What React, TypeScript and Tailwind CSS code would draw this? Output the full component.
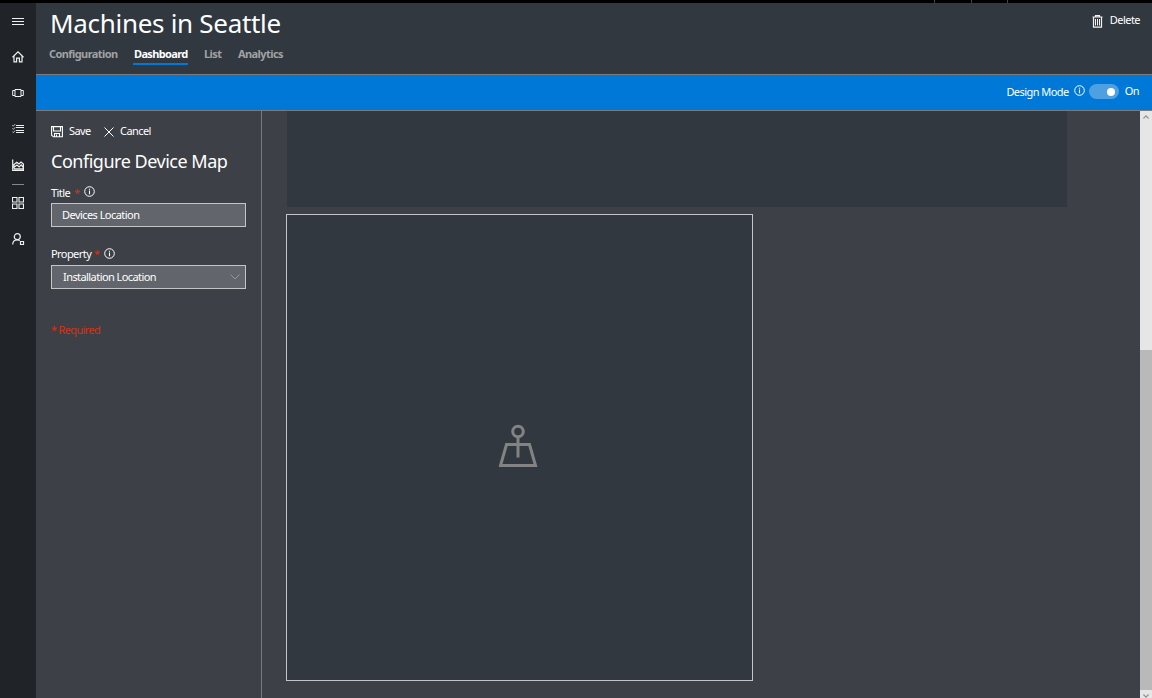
import React from "react";

type IconProps = { children: React.ReactNode; size?: number; className?: string };

function Icon({ children, size = 12, className = "" }: IconProps) {
  return (
    <svg width={size} height={size} viewBox={`0 0 ${size} ${size}`} fill="none" stroke="currentColor" strokeWidth="1" className={`block shrink-0 ${className}`}>
      {children}
    </svg>
  );
}

function InfoIcon({ className = "" }: { className?: string }) {
  return (
    <Icon size={11} className={className}>
      <circle cx="5.5" cy="5.5" r="4.8" />
      <path d="M5.5 4.6V8.3M5.5 2.7V3.8" strokeWidth="1.1" />
    </Icon>
  );
}

function Sidebar() {
  return (
    <nav className="flex w-9 shrink-0 flex-col items-center bg-[#202327] text-[#f0f0f0]">
      <div className="flex h-9 items-center">
        <Icon><path d="M0 3.5H12M0 6.5H12M0 9.5H12" /></Icon>
      </div>
      <div className="flex h-9 items-center">
        <Icon><path d="M0.5 6.3L6 0.9L11.5 6.3M2 5.2V10.8H4.6V7.2H7.4V10.8H10V5.2" strokeWidth="1.2" /></Icon>
      </div>
      <div className="flex h-9 items-center">
        <Icon><path d="M3 2.5H9V9.5H3ZM3 3.5H0.7V8.5H3M9 3.5H11.3V8.5H9" /></Icon>
      </div>
      <div className="flex h-9 items-center">
        <Icon><path d="M4 2.5H12M4 4.5H12M4 7.5H12M4 9.5H12" strokeWidth="1" /><path d="M0.3 2.2L1.3 3.2L3.2 1.1M0.3 5.4L1.3 6.4L3.2 4.3M0.3 8.6L1.3 9.6L3.2 7.5" strokeWidth="0.8" /></Icon>
      </div>
      <div className="flex h-9 items-center">
        <Icon><path d="M0.7 0.5V11.3H11.4V5L9 3L7 5L4.8 3.2L2 5.5V9.5M2.3 8L5 6L7.2 8L9.2 5.8L11 8M2 9.8H11" strokeWidth="1.2" /></Icon>
      </div>
      <div className="mt-px h-px w-3 bg-[#85878a]" />
      <div className="flex h-9 items-center">
        <Icon><path d="M0.5 0.5H5V5H0.5ZM7 0.5H11.5V5H7ZM0.5 7H5V11.5H0.5ZM7 7H11.5V11.5H7Z" strokeWidth="1.1" /></Icon>
      </div>
      <div className="flex h-9 items-center">
        <Icon size={13}><path d="M0.7 11.5C0.7 8.2 2.6 6.8 5.3 6.8C6.4 6.8 7.1 7 7.8 7.5M8.5 8.5H11.5V11.5H8.5Z" strokeWidth="1.2" /><circle cx="5.3" cy="3.7" r="3" strokeWidth="1.2" /></Icon>
      </div>
    </nav>
  );
}

function Header() {
  return (
    <header className="flex h-[72px] shrink-0 justify-between border-b border-[#7b7b7b] bg-[#32383f]">
      <div>
        <h1 className="h-[42px] pl-3.5 text-[26px] leading-[41px] tracking-[-0.3px] whitespace-nowrap">Machines in Seattle</h1>
        <div className="flex pl-[13px] text-[11px] leading-[18px] font-bold tracking-[-0.58px] whitespace-nowrap text-[#a0a2a5]">
          <span className="w-[84px]">Configuration</span>
          <span className="mr-4 h-5 w-[55px] border-b-2 border-[#0078d7] pl-px tracking-[-0.65px] text-white">Dashboard</span>
          <span className="w-[34px]">List</span>
          <span>Analytics</span>
        </div>
      </div>
      <button className="flex h-[34px] items-center pr-3 text-[11px] tracking-[-0.55px]">
        <svg width="11" height="13" viewBox="0 0 11 13" fill="none" stroke="#f2f2f2" className="mr-[7px] translate-y-px">
          <path d="M0.5 2H10.5M3.5 2V0.6H7.5V2M1.5 2V12.2H9.5V2" strokeWidth="1.2" />
          <path d="M3.5 4V10.5M5.5 4V10.5M7.5 4V10.5" />
        </svg>
        Delete
      </button>
    </header>
  );
}

function DesignBar() {
  return (
    <div className="flex h-9 shrink-0 items-center justify-end border-b border-[#7b7b7b] bg-[#0078d7] pr-[13px] text-[11px] tracking-[-0.55px]">
      <span>Design Mode</span>
      <InfoIcon className="mr-1 ml-[5px] -translate-y-0.5" />
      <span className="mr-1.5 flex h-[15px] w-[30px] -translate-y-px items-center justify-end rounded-full bg-[#4da1e3] pr-1">
        <span className="size-2 rounded-full bg-white" />
      </span>
      <span className="-translate-y-px">On</span>
    </div>
  );
}

function ConfigPanel() {
  return (
    <aside className="w-[226px] shrink-0 border-r border-[#7b7b7b] pl-[15px] text-[11px] tracking-[-0.57px]">
      <div className="flex h-10 items-center">
        <Icon size={12} className="mr-1.5 translate-y-px"><path d="M0.6 0.6H11.4V10.8H2.4L0.6 9.2ZM2.5 0.6V5H9.5V0.6M3.5 10.5V7.5H8.5V10.5M5.5 8.5V10.5" strokeWidth="1.1" /></Icon>
        <span className="w-[35px]">Save</span>
        <Icon size={10} className="mr-1.5 translate-y-px"><path d="M0.5 0.5L9.5 9.5M9.5 0.5L0.5 9.5" /></Icon>
        <span>Cancel</span>
      </div>
      <h2 className="h-[32px] text-[18px] leading-[21px] tracking-[-0.48px] whitespace-nowrap">Configure Device Map</h2>
      <div className="flex h-5 items-center">
        <span className="w-[23px]">Title</span><span className="w-2.5 text-[#d13414]">*</span>
        <InfoIcon className="-translate-y-0.5" />
      </div>
      <div className="flex h-6 w-[195px] items-center border border-[#c5c5c7] bg-[#62656c] pl-2.5 tracking-[-0.55px]">Devices Location</div>
      <div className="mt-[17px] flex h-[21px] items-center">
        <span className="w-[43px]">Property</span><span className="w-2.5 text-[#d13414]">*</span>
        <InfoIcon className="-translate-y-px" />
      </div>
      <div className="flex h-6 w-[195px] items-center justify-between border border-[#c5c5c7] bg-[#62656c] pr-[5px] pl-[11px]">
        <span>Installation Location</span>
        <svg width="10" height="6" viewBox="0 0 10 6" fill="none" stroke="#96989c"><path d="M0.5 0.5L5 5L9.5 0.5" /></svg>
      </div>
      <div className="mt-8 leading-[18px] tracking-[-0.65px] text-[#d13414]">* Required</div>
    </aside>
  );
}

function Scrollbar() {
  return (
    <div className="flex w-3 shrink-0 flex-col items-center bg-[#e6e6e6]">
      <svg width="6" height="4" viewBox="0 0 6 4" fill="none" stroke="#929292" strokeWidth="1.2" className="mt-1 block"><path d="M0.4 3.5L3 0.9L5.6 3.5" /></svg>
      <div className="mt-[231px] w-full flex-1 bg-[#b9b9b9]" />
      <div className="flex h-2 items-end pt-1">
        <svg width="6" height="4" viewBox="0 0 6 4" fill="none" stroke="#929292" strokeWidth="1.2"><path d="M0.4 0.5L3 3.1L5.6 0.5" /></svg>
      </div>
    </div>
  );
}

export default function App() {
  return (
    <div className="flex h-[698px] w-[1152px] flex-col overflow-hidden bg-[#3e4047] font-['Noto_Sans','Open_Sans',sans-serif] text-white">
      <div className="flex h-[3px] shrink-0 justify-end bg-black pr-36">
        <div className="mr-9 h-full w-px bg-[#444]" />
        <div className="mr-[35px] h-full w-px bg-[#444]" />
        <div className="h-full w-px bg-[#444]" />
      </div>
      <div className="flex min-h-0 flex-1">
        <Sidebar />
        <div className="flex min-w-0 flex-1 flex-col">
          <Header />
          <DesignBar />
          <div className="flex min-h-0 flex-1">
            <ConfigPanel />
            <main className="flex-1 pl-6">
              <div className="ml-px h-24 w-[780px] bg-[#32383f]" />
              <div className="mt-[7px] flex size-[467px] items-center justify-center border border-[#c5c5c7] bg-[#32383f]">
                <svg width="40" height="44" viewBox="0 0 40 44" fill="none" stroke="#838383" strokeWidth="3" className="-translate-x-[1.5px] -translate-y-0.5">
                  <circle cx="19.5" cy="7.5" r="5.3" />
                  <path d="M19.5 13V33.5M8 20.5H31L37 41.5H2L8 20.5H31" />
                </svg>
              </div>
            </main>
            <Scrollbar />
          </div>
        </div>
      </div>
    </div>
  );
}
